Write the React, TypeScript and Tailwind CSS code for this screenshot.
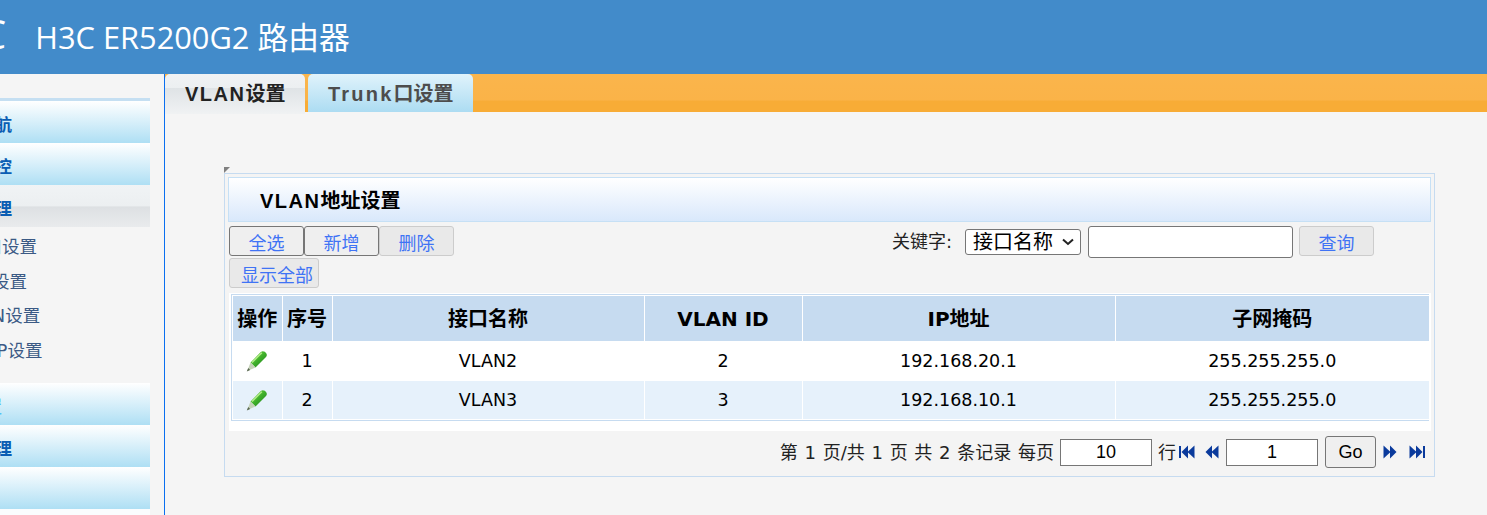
import React from "react";

const font = { cn: "font-['DejaVu_Sans','Noto_Sans_CJK_SC',sans-serif]" };

const navTop = ["系统导航", "系统监控"];
const navBottom = ["系统设置", "系统管理", ""];
const subItems = [
  { label: "接口设置", w: "ml-[-33px]" },
  { label: "路由设置", w: "ml-[-43px]" },
  { label: "VLAN设置", w: "ml-[-42px]" },
  { label: "DHCP设置", w: "ml-[-42px]" },
];

const rows = [
  { no: 1, name: "VLAN2", id: 2, ip: "192.168.20.1", mask: "255.255.255.0" },
  { no: 2, name: "VLAN3", id: 3, ip: "192.168.10.1", mask: "255.255.255.0" },
];

function NavItem({ label, shift = "ml-[-58px]", color = "text-[#0a5db3]" }: { label: string; shift?: string; color?: string }) {
  return (
    <div className="h-[42px] flex items-center overflow-hidden bg-gradient-to-b from-[#ffffff] to-[#aedff4] pt-[6px]">
      <span className={`${shift} ${color} whitespace-nowrap text-[17.5px] font-bold`}>{label}</span>
    </div>
  );
}

function Pencil() {
  return (
    <svg width="22" height="22" viewBox="0 0 22 22" className="mx-auto block">
      <defs>
        <linearGradient id="pen" x1="0" y1="0" x2="1" y2="1">
          <stop offset="0" stopColor="#86d958" />
          <stop offset="0.5" stopColor="#3fb02a" />
          <stop offset="1" stopColor="#1c7a1c" />
        </linearGradient>
      </defs>
      <path d="M4.5 12.5 L14.8 2 Q16.6 0.4 18.8 1.8 L20 3 Q21.6 5.2 20 7 L9.5 17.5 Z" fill="url(#pen)" />
      <path d="M6 12.5 L15.8 2.8" stroke="#b4ee88" strokeWidth="1.4" fill="none" />
      <path d="M4.5 12.5 L9.5 17.5 L1.2 21 Z" fill="#c5d2b8" />
      <path d="M0.8 21.4 L4.2 20 L2.2 18 Z" fill="#57664f" />
    </svg>
  );
}

function PagerIcon({ dir, bar = false }: { dir: "left" | "right"; bar?: boolean }) {
  return (
    <svg width="16" height="14" viewBox="0 0 16 14" className="block">
      <g fill="#0a3a9c" transform={dir === "right" ? "translate(16 0) scale(-1 1)" : undefined}>
        {bar && <rect x="0" y="1" width="2" height="12" />}
        <path d="M2.5 7 L9 0.5 L9 13.5 Z" />
        <path d="M8.5 7 L15.5 0.5 L15.5 13.5 Z" />
      </g>
    </svg>
  );
}

function ActionButton({ label, width, disabled }: { label: string; width: string; disabled?: boolean }) {
  return (
    <button
      className={`${width} h-[30px] rounded-[3px] border pt-[5px] text-[18px] leading-none text-[#3f73f5] ${
        disabled ? "border-[#cccccc] bg-[#e9e9e9]" : "border-[#767676] bg-[#efefef]"
      }`}
    >
      {label}
    </button>
  );
}

export default function App() {
  return (
    <div className={`h-screen w-screen overflow-hidden bg-[#f5f5f5] ${font.cn}`}>
      {/* Header */}
      <div className="flex h-[74px] items-center overflow-hidden bg-[#428bca] text-white font-['Open_Sans','Noto_Sans_CJK_SC',sans-serif]">
        <span className="ml-[-19px] mb-[6px] text-[40px] leading-none">C</span>
        <span className="ml-[29px] pt-[1px] text-[30.8px] leading-none whitespace-nowrap">H3C ER5200G2 路由器</span>
      </div>

      <div className="flex h-[441px]">
        {/* Sidebar */}
        <div className="w-[165px] shrink-0 border-r border-[#0a6ff0] pr-[14px] pt-[24px]">
          <div className="h-[3px] bg-[#c5dff2]" />
          {navTop.map((n) => (
            <NavItem key={n} label={n} />
          ))}
          <div className="h-[42px] flex items-center overflow-hidden bg-[linear-gradient(#f0f3f5_0%,#eceff1_50%,#dde0e3_52%,#e9ebed_100%)] pt-[6px]">
            <span className="ml-[-58px] whitespace-nowrap text-[17.5px] font-bold text-[#0a5db3]">接口管理</span>
          </div>
          <div className="pt-[3px] pb-[15px]">
            {subItems.map((s) => (
              <div key={s.label} className="flex h-[34.5px] items-center overflow-hidden">
                <span className={`${s.w} whitespace-nowrap text-[17.5px] text-[#3b5a85]`}>{s.label}</span>
              </div>
            ))}
          </div>
          {navBottom.map((n, i) => (
            <NavItem
              key={i}
              label={n}
              shift={i === 0 ? "ml-[-68px]" : "ml-[-58px]"}
              color={i === 0 ? "text-[#4fc3f7]" : "text-[#0a5db3]"}
            />
          ))}
          <div className="h-[6px] bg-[#fafcfe]" />
        </div>

        {/* Main */}
        <div className="flex-1 min-w-0">
          {/* Tab band */}
          <div className="flex h-[38px] bg-[linear-gradient(#fab54c_0%,#fab348_68%,#f8ac36_72%,#f8ac36_100%)] font-['Liberation_Sans','Noto_Sans_CJK_SC',sans-serif]">
            <div className="mb-[-2px] flex h-[40px] w-[140px] items-center rounded-t-[5px] bg-[linear-gradient(#f0f2f4_0%,#eceff1_34%,#dfe3e6_36%,#f0f2f3_100%)] pl-[20px] text-[20px] font-bold text-[#222222]">
              <span className="tracking-[1.5px]">VLAN</span>设置
            </div>
            <div className="ml-[3px] flex h-[38px] w-[165px] items-center rounded-t-[5px] bg-gradient-to-b from-[#e0f3fb] to-[#acdcf2] pl-[20px] pt-[1px] text-[20px] font-bold text-[#4d4d4d]">
              <span className="tracking-[2.2px]">Trunk</span>口设置
            </div>
          </div>

          {/* Panel */}
          <div className="relative ml-[59px] mt-[61px] h-[304px] w-[1211px] border border-[#c6dbf0] bg-[#f4f4f4] px-[3px] pt-[3px]">
            <div className="absolute left-[-1px] top-[-7px] h-0 w-0 border-r-[6px] border-t-[6px] border-r-transparent border-t-[#808080]" />

            <div className="flex h-[45px] items-center border border-[#c6e0f5] bg-gradient-to-b from-[#ffffff] to-[#d9e8fb] pl-[31px] pt-[3px] text-[20px] font-bold text-black font-['Liberation_Sans','Noto_Sans_CJK_SC',sans-serif]">
              <span className="tracking-[1.5px]">VLAN</span>地址设置
            </div>

            {/* Toolbar */}
            <div className="ml-[1px] mt-[4px] flex h-[67px] justify-between">
              <div className="flex w-[225px] flex-wrap content-start gap-y-[2px]">
                <ActionButton label="全选" width="w-[75px]" />
                <ActionButton label="新增" width="w-[75px]" />
                <ActionButton label="删除" width="w-[75px]" disabled />
                <ActionButton label="显示全部" width="w-[90px] pl-[6px]" disabled />
              </div>
              <div className="mr-[57px] flex items-start">
                <span className="mt-[3px] text-[18px] leading-[26px] text-[#222222]">关键字:</span>
                <div className="relative ml-[13px] mt-[3px]">
                  <select className="h-[26px] w-[116px] appearance-none rounded-[3px] border border-[#767676] bg-white pl-[7px] text-[20px] leading-none text-black">
                    <option>接口名称</option>
                  </select>
                  <svg width="14" height="8" viewBox="0 0 14 8" className="pointer-events-none absolute right-[6px] top-[9px]">
                    <path d="M2 1.5 L7 6 L12 1.5" stroke="#222222" strokeWidth="2" fill="none" />
                  </svg>
                </div>
                <input className="ml-[7px] h-[32px] w-[205px] rounded-[3px] border border-[#767676] bg-white" />
                <div className="ml-[6px]">
                  <ActionButton label="查询" width="w-[75px]" disabled />
                </div>
              </div>
            </div>

            {/* Table */}
            <div className="ml-[1px] h-[138px] w-[1202px] bg-white pt-[1px]">
              <div className="ml-[2px] w-[1198px] border-b border-l border-t border-[#c6dbf0] pb-[1px] pl-[1px] pt-[1px]">
                <table className="w-[1196px] table-fixed border-collapse text-black">
                  <colgroup>
                    <col className="w-[49px]" />
                    <col className="w-[50px]" />
                    <col className="w-[312px]" />
                    <col className="w-[158px]" />
                    <col className="w-[313px]" />
                    <col className="w-[314px]" />
                  </colgroup>
                  <thead>
                    <tr className="h-[45px] bg-[#c6dbf0] text-[20px] font-bold">
                      {["操作", "序号", "接口名称", "VLAN ID", "IP地址", "子网掩码"].map((h) => (
                        <th key={h} className="border-r border-white p-0 pt-[1px] font-bold whitespace-nowrap last:border-r-0">
                          {h}
                        </th>
                      ))}
                    </tr>
                  </thead>
                  <tbody className="text-[17.5px]">
                    {rows.map((r, i) => (
                      <tr key={r.no} className={i === 0 ? "h-[40px] bg-white" : "h-[38px] bg-[#e6f1fb]"}>
                        <td className="border-r border-white p-0">
                          <Pencil />
                        </td>
                        <td className="border-r border-white p-0 text-center">{r.no}</td>
                        <td className="border-r border-white p-0 text-center">{r.name}</td>
                        <td className="border-r border-white p-0 text-center">{r.id}</td>
                        <td className="border-r border-white p-0 text-center">{r.ip}</td>
                        <td className="p-0 text-center">{r.mask}</td>
                      </tr>
                    ))}
                  </tbody>
                </table>
              </div>
            </div>

            {/* Pager */}
            <div className="ml-[1px] flex w-[1202px] items-center justify-end pr-[6px] pt-[5px] text-[18px] text-[#222222]">
              <span className="whitespace-nowrap [word-spacing:1px]">第 1 页/共 1 页 共 2 条记录 每页</span>
              <input
                readOnly
                value="10"
                className="ml-[6px] h-[27px] w-[92px] border border-[#767676] bg-white text-center text-[18px] font-['Liberation_Sans'] text-black"
              />
              <span className="ml-[6px]">行</span>
              <span className="ml-[3px]"><PagerIcon dir="left" bar /></span>
              <span className="ml-[8px]"><PagerIcon dir="left" /></span>
              <input
                readOnly
                value="1"
                className="ml-[7px] h-[27px] w-[92px] border border-[#767676] bg-white text-center text-[18px] font-['Liberation_Sans'] text-black"
              />
              <button className="ml-[7px] h-[32px] w-[51px] rounded-[3px] border border-[#767676] bg-[#efefef] text-[18px] font-['Liberation_Sans'] text-black">
                Go
              </button>
              <span className="ml-[7px]"><PagerIcon dir="right" /></span>
              <span className="ml-[10px]"><PagerIcon dir="right" bar /></span>
            </div>
          </div>
        </div>
      </div>
    </div>
  );
}
